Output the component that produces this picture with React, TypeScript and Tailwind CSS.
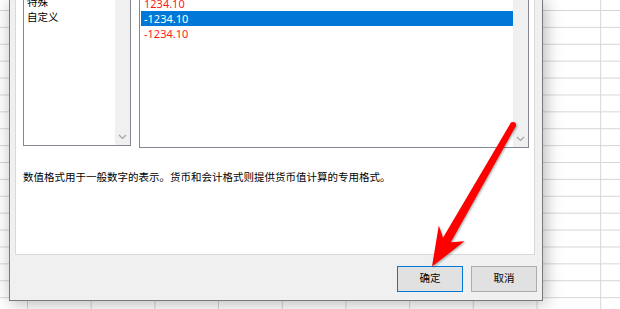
import React from 'react'

function Chevron() {
  return (
    <svg width="9" height="6" viewBox="0 0 9 6" className="block">
      <polyline points="1,1 4.5,4.5 8,1" fill="none" stroke="#a6a6a6" strokeWidth="1.2" />
    </svg>
  )
}

function ScrollTrack() {
  return (
    <div className="flex w-[15px] flex-col justify-end bg-[#f0f0f0]">
      <div className="flex h-[17px] items-center justify-center">
        <Chevron />
      </div>
    </div>
  )
}

function RedArrow() {
  return (
    <svg
      className="pointer-events-none absolute inset-0 drop-shadow-[1px_1px_1px_rgba(0,0,0,0.35)]"
      width="620"
      height="309"
      viewBox="0 0 620 309"
    >
      <polygon
        fill="#ff0000"
        points="515.6,126.5 450.8,242.2 464.5,241.3 432,266.5 438.8,225.6 443,237.8 510.4,123.5"
      />
      <circle cx="513" cy="125" r="3" fill="#ff0000" />
    </svg>
  )
}

export default function App() {
  return (
    <div className="relative h-[309px] w-[620px] overflow-hidden bg-white bg-[image:linear-gradient(to_right,#d6d6d6_1px,transparent_1px),linear-gradient(to_bottom,#d6d6d6_1px,transparent_1px)] bg-[size:63.7px_16.9px] bg-[position:27px_10px] font-['Noto_Sans','Noto_Sans_CJK_SC',sans-serif] text-black">
      {/* format cells dialog */}
      <div className="absolute left-[9px] top-0 flex h-[301px] w-[534px] flex-col border-x border-b border-[#7a7a7a] bg-[#f0f0f0] shadow-[2px_2px_16px_rgba(0,0,0,0.3)]">
        <div className="ml-[5px] flex h-[255px] w-[520px] flex-col border-x border-b border-[#d9d9d9] bg-white">
          <div className="flex items-start gap-[8px] pl-[7px]">
            <div className="flex h-[146px] w-[108px] border-x border-b border-[#828790]">
              <div className="flex-1 overflow-hidden">
                <div className="-mt-[5px] pl-[3px] text-[10.5px] leading-[15px]">
                  <div className="h-[15px]">特殊</div>
                  <div className="h-[15px]">自定义</div>
                </div>
              </div>
              <ScrollTrack />
            </div>
            <div className="flex h-[148px] w-[390px] border-x border-b border-[#828790]">
              <div className="flex-1 overflow-hidden pl-px">
                <div className="-mt-[4px] text-[11px] leading-[15px]">
                  <div className="h-[15px] pl-[3px] text-[#ff1a1a]">1234.10</div>
                  <div className="h-[15px] bg-[#0078d7] pl-[3px] text-white">-1234.10</div>
                  <div className="h-[15px] pl-[3px] text-[#ff1a1a]">-1234.10</div>
                </div>
              </div>
              <ScrollTrack />
            </div>
          </div>
          <p className="mt-[22px] pl-[7px] text-[10.5px] leading-[14px]">
            数值格式用于一般数字的表示。货币和会计格式则提供货币值计算的专用格式。
          </p>
        </div>
        <div className="mt-[11px] flex justify-end gap-[8px] pr-[5px]">
          <button className="h-[26px] w-[66px] border border-[#0078d7] bg-[#e1e1e1] text-[10.5px]">
            确定
          </button>
          <button className="h-[26px] w-[66px] border border-[#adadad] bg-[#e1e1e1] text-[10.5px]">
            取消
          </button>
        </div>
      </div>
      <RedArrow />
    </div>
  )
}
